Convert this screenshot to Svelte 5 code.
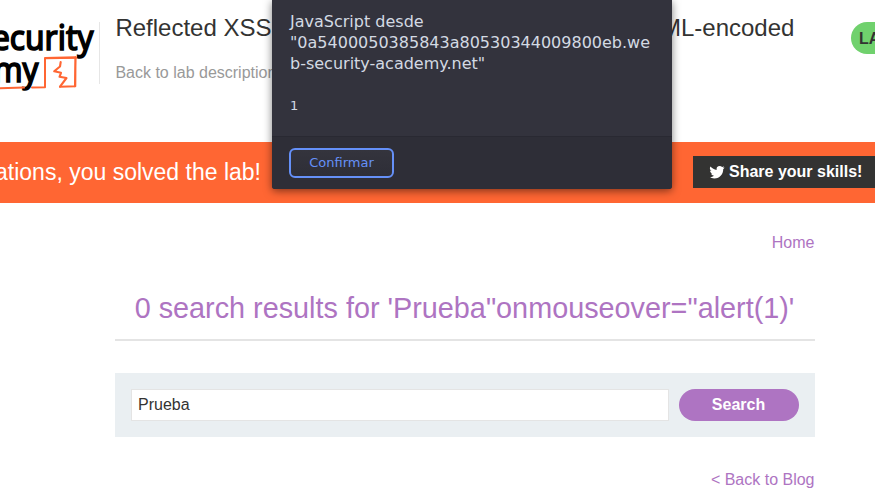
<script>
  let query = $state('Prueba');
</script>

<div class="page">
  <header>
    <svg class="logo" width="99" height="110" viewBox="0 0 99 110" role="img" aria-label="Web Security Academy">
      <g class="word">
        <text x="93.5" y="50" text-anchor="end" textLength="119" lengthAdjust="spacingAndGlyphs">Security</text>
        <text x="38.5" y="82.3" text-anchor="end" textLength="134" lengthAdjust="spacingAndGlyphs">Academy</text>
      </g>
      <g fill="none" stroke="#f63" stroke-linejoin="round" stroke-linecap="round">
        <path stroke-width="2" d="M-4 88.5L24 87.6M32 87.6L45 87.3L45 58L75.5 57.3L75.3 86.3L60 86.8" />
        <path stroke-width="1.5" d="M45 58.5L76.5 58M75.5 57L74.7 86.5" />
        <path stroke-width="2.1" d="M60.7 62L60 66.5L54.2 71.3L61 72.8L59.5 76.8L66.5 78L60 86.7" />
      </g>
    </svg>
    <div class="title">
      <h2>Reflected XSS into attribute with angle brackets HTML-encoded</h2>
      <span class="back">Back to lab description</span>
    </div>
    <div class="status">LAB</div>
  </header>

  <section class="banner">
    <div class="message">Congratulations, you solved the lab!</div>
    <div class="share">
      <svg width="16" height="16" viewBox="-1 0 25 24" fill="#fff">
        <path d="M23.2 4.9c-.9.4-1.8.6-2.8.8 1-.6 1.8-1.6 2.1-2.7-.9.6-2 1-3.1 1.2a4.9 4.9 0 0 0-8.4 4.5C7.4 8.5 3.8 6.5 1.3 3.5a4.9 4.9 0 0 0 1.5 6.6c-.8 0-1.6-.3-2.2-.6v.1c0 2.4 1.7 4.4 3.9 4.8-.7.2-1.5.2-2.2.1.6 2 2.4 3.4 4.6 3.4A9.9 9.9 0 0 1-.3 20a14 14 0 0 0 7.5 2.2c9.1 0 14-7.5 14-14v-.7c.9-.7 1.6-1.6 2-2.6z" />
      </svg>
      <span>Share your skills!</span>
    </div>
  </section>

  <main>
    <nav>Home</nav>
    <h1>0 search results for 'Prueba"onmouseover="alert(1)'</h1>
    <form onsubmit={(event) => event.preventDefault()}>
      <input type="text" bind:value={query} aria-label="Search" />
      <button type="submit">Search</button>
    </form>
    <div class="blog">&lt; Back to Blog</div>
  </main>

  <div class="dialog" role="alertdialog" aria-label="JavaScript">
    <div class="content">
      <div class="origin">JavaScript desde<br />"0a5400050385843a80530344009800eb.we<br />b-security-academy.net"</div>
      <div class="value">1</div>
    </div>
    <div class="actions"><button>Confirmar</button></div>
  </div>
</div>

<style>
  .page {
    position: relative;
    width: 875px;
    height: 502px;
    overflow: hidden;
    background: #fff;
    color: #333332;
    font: 16px/20px "Liberation Sans", Arial, sans-serif;
  }
  header { display: flex; height: 142px; }
  .logo { flex: none; }
  .word {
    fill: #000;
    stroke: #000;
    stroke-width: 1.6px;
    font: 400 34.5px "Noto Sans", sans-serif;
  }
  .title {
    flex: none;
    box-sizing: border-box;
    width: 752px;
    height: 62px;
    margin-top: 22px;
    padding-left: 15.4px;
    border-left: 1px solid #e6e6e6;
    white-space: nowrap;
  }
  h2 { margin: -8px 0 0; font-size: 24px; font-weight: 400; line-height: 28px; }
  .back { display: block; margin-top: 21px; color: #999; }
  .status {
    flex: none;
    box-sizing: border-box;
    width: 140px;
    height: 32px;
    margin-top: 22px;
    padding-left: 8px;
    border-radius: 16px;
    background: #70d16d;
    font-weight: 700;
    line-height: 33px;
  }
  .banner {
    display: flex;
    align-items: center;
    height: 61px;
    background: #f63;
    color: #fff;
  }
  .message {
    display: flex;
    flex: none;
    justify-content: flex-end;
    width: 261px;
    margin-bottom: 2px;
    overflow: hidden;
    font-size: 23px;
    line-height: 30px;
    white-space: nowrap;
  }
  .share {
    display: flex;
    flex: none;
    align-items: center;
    gap: 4px;
    box-sizing: border-box;
    width: 190px;
    height: 32px;
    margin: 0 0 1px 432px;
    padding-left: 16px;
    background: #333332;
    font-weight: 700;
  }
  main { width: 700px; margin-left: 115px; }
  nav { padding: 30px 0.5px 0 0; text-align: right; color: #ae74c2; }
  h1 {
    height: 50px;
    margin: 36px 0 32px;
    padding-right: 1px;
    border-bottom: 2px solid #e4e4e4;
    color: #ae74c2;
    font-size: 28.8px;
    font-weight: 400;
    line-height: 38px;
    text-align: center;
    white-space: nowrap;
  }
  form {
    display: flex;
    gap: 10px;
    height: 32px;
    padding: 16px;
    background: #eaeff2;
  }
  form input {
    box-sizing: border-box;
    flex: 1;
    min-width: 0;
    padding: 0 6px;
    border: 1px solid #e4e4e4;
    background: #fff;
    color: #333332;
    font: inherit;
    outline: none;
  }
  form button {
    width: 120px;
    padding: 0 1px 0 0;
    border: 0;
    border-radius: 16px;
    background: #ae74c2;
    color: #fff;
    font: inherit;
    font-weight: 700;
  }
  .blog { margin: 33px 0.5px 0 0; text-align: right; color: #ae74c2; }
  .dialog {
    position: absolute;
    top: 0;
    left: 272px;
    width: 400px;
    height: 189px;
    border-radius: 0 0 3px 3px;
    background: #33333d;
    box-shadow: 0 2px 8px rgba(0, 0, 0, 0.5);
    color: #d3dae3;
    font-family: "DejaVu Sans", sans-serif;
  }
  .content { box-sizing: border-box; height: 136px; padding: 11px 0 0 18px; white-space: nowrap; }
  .origin { font-size: 16px; line-height: 21px; }
  .value { margin-top: 22px; font-size: 13px; line-height: 20px; }
  .actions {
    box-sizing: border-box;
    height: 53px;
    padding: 11px 17px;
    border-top: 1px solid #292932;
    border-radius: 0 0 3px 3px;
    background: #2e2e37;
  }
  .actions button {
    display: block;
    width: 105px;
    height: 30px;
    padding: 0 0 2px;
    border: 2px solid #6590f8;
    border-radius: 6px;
    background: linear-gradient(#34343d, #2e2e37);
    color: #6590f8;
    font: 13px "DejaVu Sans", sans-serif;
  }
</style>
